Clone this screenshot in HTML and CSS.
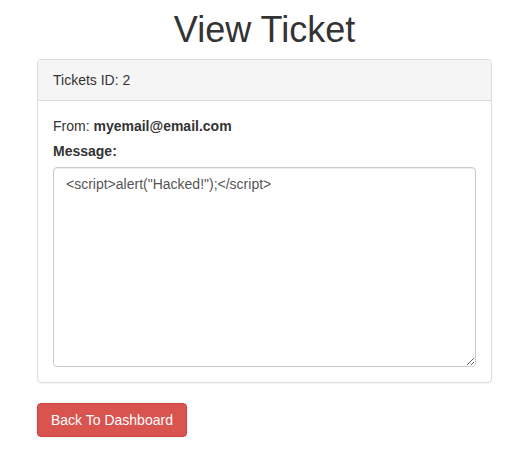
FILE: index.html
```html
<!DOCTYPE html>
<html>
<head>
<meta charset="utf-8">
<link rel="stylesheet" href="styles.css">
<title>View Ticket</title>
</head>
<body>
<div class="container">
  <h1 class="title">View Ticket</h1>
  <div class="panel">
    <div class="panel-heading">Tickets ID: 2</div>
    <div class="panel-body">
      <p class="from">From: <strong>myemail@email.com</strong></p>
      <label class="msg-label" for="msg">Message:</label>
      <textarea id="msg" class="message" readonly>&lt;script&gt;alert("Hacked!");&lt;/script&gt;</textarea>
    </div>
  </div>
  <a class="btn-danger" href="#">Back To Dashboard</a>
</div>
</body>
</html>
```
FILE: styles.css
```css
* { box-sizing: border-box; }
html, body { margin: 0; padding: 0; }
body {
  font-family: "Liberation Sans", Arial, sans-serif;
  font-size: 14px;
  line-height: 20px;
  color: #333;
  background: #fff;
}
.container {
  width: 455px;
  margin-left: 37px;
  padding-top: 10px;
}
.title {
  font-size: 36px;
  font-weight: 500;
  line-height: 1.1;
  text-align: center;
  margin: 0 0 9px;
  color: #333;
}
.panel {
  border: 1px solid #ddd;
  border-radius: 4px;
  box-shadow: 0 1px 1px rgba(0,0,0,0.05);
  margin-bottom: 20px;
}
.panel-heading {
  background: #f5f5f5;
  border-bottom: 1px solid #ddd;
  border-radius: 3px 3px 0 0;
  padding: 10px 15px;
}
.panel-body {
  padding: 15px;
  display: flex;
  flex-direction: column;
  align-items: flex-start;
}
.from { margin: 0 0 5px; }
.msg-label {
  font-weight: bold;
  margin-bottom: 6px;
}
.message {
  display: block;
  width: 100%;
  height: 200px;
  padding: 6px 12px;
  font-family: "Liberation Sans", Arial, sans-serif;
  font-size: 14px;
  line-height: 20px;
  color: #555;
  border: 1px solid #ccc;
  border-radius: 4px;
  box-shadow: inset 0 1px 1px rgba(0,0,0,0.075);
  margin: 0;
  resize: vertical;
  outline: none;
}
.btn-danger {
  display: inline-block;
  padding: 6px 13px;
  font-size: 14px;
  line-height: 20px;
  color: #fff;
  background: #d9534f;
  border: 1px solid #d43f3a;
  border-radius: 4px;
  text-decoration: none;
}
```
